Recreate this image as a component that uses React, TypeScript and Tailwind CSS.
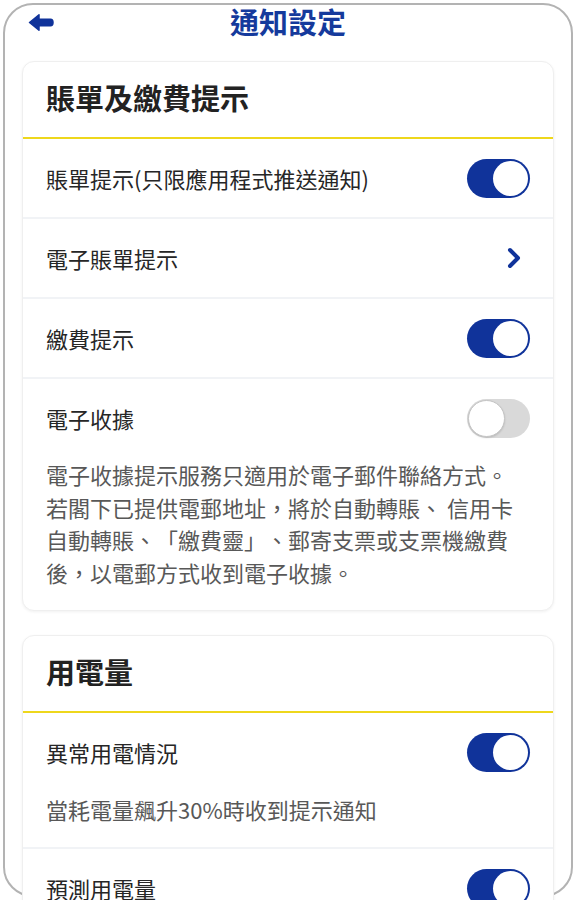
import React, { useState } from 'react';

const FONT = '"Noto Sans CJK TC", "Noto Sans CJK SC", "Noto Sans", sans-serif';

function Toggle({ on, onChange }: { on: boolean; onChange: () => void }) {
  return (
    <button
      onClick={onChange}
      className={`flex h-[39px] w-[63px] shrink-0 items-center rounded-full p-[2px] ${
        on ? 'justify-end bg-[#10339a]' : 'justify-start bg-[#d9d9d9]'
      }`}
    >
      <span
        className={`block rounded-full bg-white ${
          on ? 'h-[35px] w-[35px]' : 'h-[37px] w-[37px] -ml-[1px] border border-[#c4c4c4] shadow-[0_1px_2px_rgba(0,0,0,0.15)]'
        }`}
      />
    </button>
  );
}

function Chevron() {
  return (
    <svg width="14" height="22" viewBox="0 0 14 22" fill="none">
      <polyline
        points="3,3 11,11 3,19"
        stroke="#10339a"
        strokeWidth="4"
        strokeLinecap="round"
        strokeLinejoin="round"
      />
    </svg>
  );
}

function Row({ label, children }: { label: string; children?: React.ReactNode }) {
  return (
    <div className="box-content flex h-[78px] items-center justify-between px-[23px]">
      <span className="text-[22px] leading-[32px] text-[#262626]">{label}</span>
      {children}
    </div>
  );
}

function Card({ title, children }: { title: string; children: React.ReactNode }) {
  return (
    <div className="overflow-hidden rounded-[12px] border border-[#efefef] bg-white shadow-[0_1px_3px_rgba(0,0,0,0.06)]">
      <div className="flex h-[75px] items-center pb-[5px] pl-[23px]">
        <h2 className="text-[29px] font-bold leading-[40px] text-[#222]">{title}</h2>
      </div>
      <div className="h-[2px] bg-[#eed71c]" />
      <div className="divide-y-2 divide-[#f1f3f6]">{children}</div>
    </div>
  );
}

export default function App() {
  const [settings, setSettings] = useState({
    bill: true,
    payment: true,
    receipt: false,
    abnormal: true,
    forecast: true,
  });

  const flip = (key: keyof typeof settings) =>
    setSettings((s) => ({ ...s, [key]: !s[key] }));

  return (
    <div
      className="h-[900px] w-[576px] overflow-hidden bg-white p-[3px] [text-spacing-trim:space-all]"
      style={{ fontFamily: FONT }}
    >
      <div className="h-[894px] rounded-[30px] border-2 border-[#b3b3b3] bg-white">
        {/* Header */}
        <div className="grid h-[38px] grid-cols-[1fr_auto_1fr]">
          <div className="pl-[23px] pt-[8px]">
            <svg width="26" height="19" viewBox="0 0 26 19">
              <path
                d="M1.5 9.5 L11 1.8 L11 6.2 L22.5 6.2 Q25 6.2 25 9.5 Q25 12.8 22.5 12.8 L11 12.8 L11 17.2 Z"
                fill="#10339a"
                stroke="#10339a"
                strokeWidth="1.5"
                strokeLinejoin="round"
              />
            </svg>
          </div>
          <h1 className="text-[29px] font-bold leading-[33px] text-[#153a9c]">通知設定</h1>
          <div />
        </div>

        <div className="mx-[17px] mt-[18px] flex flex-col gap-[24px]">
          <Card title="賬單及繳費提示">
            <Row label="賬單提示(只限應用程式推送通知)">
              <Toggle on={settings.bill} onChange={() => flip('bill')} />
            </Row>
            <Row label="電子賬單提示">
              <span className="pr-[9px]">
                <Chevron />
              </span>
            </Row>
            <Row label="繳費提示">
              <Toggle on={settings.payment} onChange={() => flip('payment')} />
            </Row>
            <div className="pb-[22px]">
              <Row label="電子收據">
                <Toggle on={settings.receipt} onChange={() => flip('receipt')} />
              </Row>
              <p className="mt-[1px] whitespace-pre-line px-[23px] text-[22px] leading-[32.5px] text-[#585858]">
                {'電子收據提示服務只適用於電子郵件聯絡方式。\n若閣下已提供電郵地址，將於自動轉賬、 信用卡\n自動轉賬、「繳費靈」、郵寄支票或支票機繳費\n後，以電郵方式收到電子收據。'}
              </p>
            </div>
          </Card>

          <Card title="用電量">
            <div className="pb-[22px]">
              <Row label="異常用電情況">
                <Toggle on={settings.abnormal} onChange={() => flip('abnormal')} />
              </Row>
              <p className="mt-[2px] px-[23px] text-[22px] leading-[32px] text-[#585858]">
                當耗電量飆升30%時收到提示通知
              </p>
            </div>
            <Row label="預測用電量">
              <Toggle on={settings.forecast} onChange={() => flip('forecast')} />
            </Row>
          </Card>
        </div>
      </div>
    </div>
  );
}
